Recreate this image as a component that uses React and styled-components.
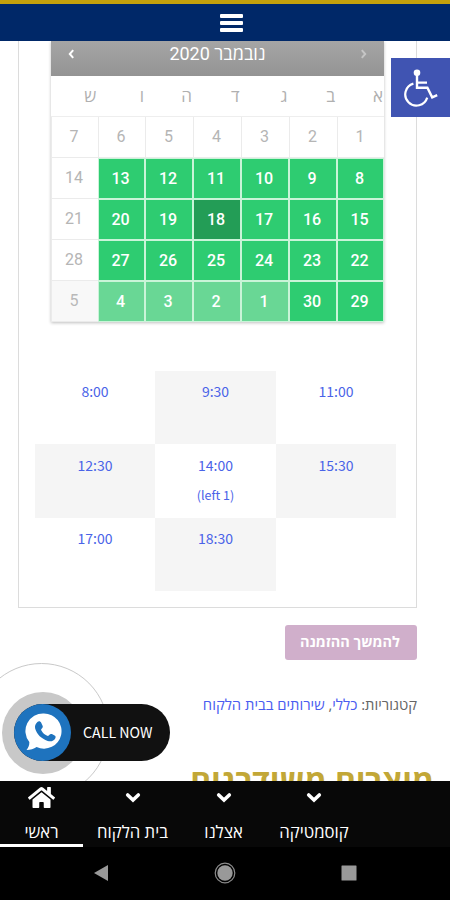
import React from "react";
import styled, { createGlobalStyle } from "styled-components";
import { FaHome } from "react-icons/fa";

const weekdays = ["א", "ב", "ג", "ד", "ה", "ו", "ש"];

const days = [
  [1, "off"], [2, "off"], [3, "off"], [4, "off"], [5, "off"], [6, "off"], [7, "off"],
  [8, "open"], [9, "open"], [10, "open"], [11, "open"], [12, "open"], [13, "open"], [14, "off"],
  [15, "open"], [16, "open"], [17, "open"], [18, "current"], [19, "open"], [20, "open"], [21, "off"],
  [22, "open"], [23, "open"], [24, "open"], [25, "open"], [26, "open"], [27, "open"], [28, "off"],
  [29, "open"], [30, "open"], [1, "next"], [2, "next"], [3, "next"], [4, "next"], [5, "nextOff"],
];

const slots = ["8:00", "9:30", "11:00", "12:30", "14:00", "15:30", "17:00", "18:30"];

const links = [
  { label: "בית הלקוח", width: 99 },
  { label: "אצלנו", width: 83 },
  { label: "קוסמטיקה", width: 98 },
];

const App = () => {
  return (
    <React.Fragment>
      <GlobalStyle />
      <Screen>
        <TopBar>
          <Burger>
            <span />
            <span />
            <span />
          </Burger>
        </TopBar>
        <Page>
          <Card>
            <Calendar>
              <Month>
                <Arrow>
                  <svg width="7" height="10" viewBox="0 0 7 10">
                    <path d="M5.2 1.2 1.8 5l3.4 3.8" />
                  </svg>
                </Arrow>
                <Title>נובמבר 2020</Title>
                <Arrow $dim>
                  <svg width="7" height="10" viewBox="0 0 7 10">
                    <path d="M1.8 1.2 5.2 5 1.8 8.8" />
                  </svg>
                </Arrow>
              </Month>
              <Weekdays>
                {weekdays.map((day) => (
                  <span key={day}>{day}</span>
                ))}
              </Weekdays>
              <Days>
                {days.map(([day, state], index) => (
                  <Day key={index} $state={state}>
                    {day}
                  </Day>
                ))}
              </Days>
            </Calendar>
            <Slots>
              {slots.map((slot, index) => (
                <Slot key={slot} $shaded={index % 2 === 1}>
                  {slot}
                  {slot === "14:00" && <small>(left 1)</small>}
                </Slot>
              ))}
            </Slots>
          </Card>
          <Submit>להמשך ההזמנה</Submit>
          <Categories>
            קטגוריות: <a>כללי</a>, <a>שירותים בבית הלקוח</a>
          </Categories>
          <Heading>מוצרים משודרגים</Heading>
          <Accessibility>
            <svg width="36" height="38" viewBox="0 0 36 38">
              <circle cx="14" cy="3.8" r="3.3" fill="#fff" />
              <path
                d="M14 6v12.8h10.4l4.8 9.6 5-2.3M15 13.6h9"
                fill="none"
                stroke="#fff"
                strokeWidth="2.4"
              />
              <path
                d="M10.4 14.6a11.2 11.2 0 1 0 13.8 14"
                fill="none"
                stroke="#fff"
                strokeWidth="2.2"
              />
            </svg>
          </Accessibility>
          <CallWidget>
            <Ring />
            <Halo />
            <CallPill>
              <CallIcon>
                <svg width="38" height="40" viewBox="0 0 38 40">
                  <path
                    d="M20 1.5a17.6 17.6 0 1 1-7.4 33.6C9.8 36.9 6.4 38 2.5 38c2-2.3 3-5 2.8-7.9A17.6 17.6 0 0 1 20 1.5z"
                    fill="#fff"
                  />
                  <path
                    d="M13.4 10.1c1.2-1.4 2.9-1.2 3.8.6l1.4 3c.5 1.1.1 2-1 3.1-.6.6-.6 1.1-.2 1.8 1.4 2.5 3.2 4.1 5.8 5.2.7.3 1.2.1 1.8-.6 1-1.2 1.8-1.6 2.9-1.1l2.7 1.4c1.2.7 1.3 1.7.6 3-1.4 2.5-4.3 3.5-7.5 2.4-6.4-2.2-10.7-6.2-12.5-12.1-.7-2.6.3-5 2.2-6.7z"
                    fill="#1e73be"
                  />
                </svg>
              </CallIcon>
              CALL NOW
            </CallPill>
          </CallWidget>
        </Page>
        <BottomNav>
          <NavItem $width={83} $active>
            <FaHome size={27} />
            <span>ראשי</span>
          </NavItem>
          {links.map(({ label, width }) => (
            <NavItem key={label} $width={width}>
              <svg width="16" height="27" viewBox="0 0 16 27">
                <path
                  d="M2.7 11 8 16l5.3-5"
                  fill="none"
                  stroke="#fff"
                  strokeWidth="3.6"
                  strokeLinecap="round"
                />
              </svg>
              <span>{label}</span>
            </NavItem>
          ))}
        </BottomNav>
        <SystemBar>
          <svg width="16" height="18" viewBox="0 0 16 18">
            <path d="M1 9 15 1v16z" fill="#999" />
          </svg>
          <svg width="22" height="22" viewBox="0 0 22 22">
            <circle cx="11" cy="11" r="9.8" fill="none" stroke="#8c8c8c" strokeWidth="1.2" />
            <circle cx="11" cy="11" r="7.7" fill="#999" />
          </svg>
          <svg width="16" height="16" viewBox="0 0 16 16">
            <rect x="0.5" y="0.5" width="15" height="15" rx="0.5" fill="#999" />
          </svg>
        </SystemBar>
      </Screen>
    </React.Fragment>
  );
};

const GlobalStyle = createGlobalStyle`
  *{
    box-sizing: border-box;
  }
  body{
    margin: 0;
    background: #fff;
  }
`;

const Screen = styled.div`
  width: 450px;
  height: 900px;
  display: flex;
  flex-direction: column;
  overflow: hidden;
  font-family: "Open Sans", "Noto Sans", sans-serif;
`;

const TopBar = styled.header`
  height: 41px;
  flex-shrink: 0;
  display: flex;
  justify-content: center;
  padding: 10px 0 0 13px;
  border-top: 4px solid #c5a10b;
  background: #002868;
`;

const Burger = styled.div`
  width: 23px;
  height: 18px;
  display: flex;
  flex-direction: column;
  justify-content: space-between;
  span{
    height: 4px;
    border-radius: 1px;
    background: #fff;
  }
`;

const Page = styled.main`
  position: relative;
  height: 740px;
  flex-shrink: 0;
  overflow: hidden;
  direction: rtl;
  padding: 0 33px 0 18px;
`;

const Card = styled.section`
  height: 567px;
  border: 1px solid #dcdcdc;
  border-top: 0;
  padding: 0 20px 0 16px;
`;

const Calendar = styled.div`
  width: 333px;
  margin-right: 12px;
  box-shadow: 0 1px 3px rgba(0, 0, 0, 0.25);
  font-family: Roboto, "Open Sans", sans-serif;
`;

const Month = styled.div`
  height: 35px;
  display: flex;
  direction: ltr;
  justify-content: space-between;
  padding: 8px 17px 0 17px;
  background: linear-gradient(#a5a5a5, #949494);
  color: #fff;
`;

const Title = styled.div`
  direction: rtl;
  font-size: 18px;
  line-height: 10px;
`;

const Arrow = styled.span`
  opacity: ${({ $dim }) => ($dim ? 0.4 : 1)};
  svg{
    display: block;
    fill: none;
    stroke: #fff;
    stroke-width: 2;
  }
`;

const Weekdays = styled.div`
  height: 41px;
  display: grid;
  grid-template-columns: repeat(6, 47.8px) 46px;
  border-bottom: 1px solid #eee;
  color: #b0b0b0;
  font-size: 17px;
  line-height: 41px;
  span{
    padding-right: 1px;
  }
`;

const Days = styled.div`
  display: grid;
  grid-template-columns: 47px repeat(4, 48px) 47px 47px;
  grid-auto-rows: 41px;
`;

const dayColors = {
  off: ["#fff", "#b5b5b5", "#ebebeb"],
  open: ["#2ecc71", "#fff", "#c9f4d8"],
  current: ["#239d56", "#fff", "#c9f4d8"],
  next: ["#69d795", "#fff", "#c9f4d8"],
  nextOff: ["#f8f8f8", "#b9b9b9", "#ebebeb"],
};

const Day = styled.div`
  padding-right: 1px;
  padding-right: 2px;
  background: ${({ $state }) => dayColors[$state][0]};
  color: ${({ $state }) => dayColors[$state][1]};
  border: 0 solid ${({ $state }) => dayColors[$state][2]};
  border-width: ${({ $state }) => ($state.includes("ff") ? "0 0 1px 1px" : "1px")};
  font-size: 16px;
  font-weight: ${({ $state }) => ($state.includes("ff") ? 400 : 500)};
  line-height: ${({ $state }) => ($state.includes("ff") ? 40 : 39)}px;
  text-align: center;
`;

const Slots = styled.div`
  display: grid;
  direction: ltr;
  grid-template-columns: 120px 121px 120px;
  grid-auto-rows: 73.3px;
  margin-top: 49px;
`;

const Slot = styled.div`
  padding-top: 6.4px;
  background: ${({ $shaded }) => ($shaded ? "#f5f5f5" : "#fff")};
  color: #4a63e8;
  font-family: "Noto Sans CJK JP", sans-serif;
  font-size: 14px;
  line-height: 29px;
  text-align: center;
  small{
    display: block;
    font-size: 12.5px;
  }
`;

const Submit = styled.button`
  display: block;
  width: 132px;
  height: 35px;
  margin-top: 17px;
  padding: 0 2px 2px 0;
  border: 0;
  border-radius: 3px;
  background: #d0afcb;
  color: #fff;
  font: 700 14.5px "Open Sans", sans-serif;
`;

const Categories = styled.p`
  margin: 34px 0 0;
  color: #666;
  font-size: 14.8px;
  line-height: 20px;
  white-space: nowrap;
  a{
    color: #4a5cf0;
  }
`;

const Heading = styled.h2`
  margin: 45px -17px 0 0;
  color: #c2a737;
  font-size: 32px;
  font-weight: 700;
  line-height: 44px;
  white-space: nowrap;
`;

const Accessibility = styled.div`
  position: absolute;
  top: 17px;
  right: 0;
  width: 59px;
  height: 59px;
  padding: 11px 11px 0 0;
  background: #4054b2;
`;

/* floating call button */
const CallWidget = styled.div`
  position: absolute;
  left: 0;
  top: 621px;
  width: 170px;
  height: 140px;
  direction: ltr;
`;

const Ring = styled.div`
  position: absolute;
  left: -26px;
  top: 1px;
  width: 135px;
  height: 135px;
  border: 1px solid #c9c9c9;
  border-radius: 50%;
`;

const Halo = styled.div`
  position: absolute;
  left: 2px;
  top: 30px;
  width: 82px;
  height: 82px;
  border-radius: 50%;
  background: #c8c8c8;
`;

const CallPill = styled.div`
  position: absolute;
  left: 14px;
  top: 42px;
  width: 156px;
  height: 57px;
  display: flex;
  align-items: center;
  gap: 12px;
  border-radius: 29px;
  background: #111;
  color: #fff;
  font-family: "Noto Sans CJK JP", sans-serif;
  font-size: 14.2px;
  line-height: 20px;
  padding-bottom: 1px;
  white-space: nowrap;
`;

const CallIcon = styled.span`
  width: 57px;
  height: 57px;
  display: flex;
  align-items: center;
  justify-content: center;
  flex-shrink: 0;
  border-radius: 50%;
  background: #1e73be;
`;

const BottomNav = styled.nav`
  height: 66px;
  flex-shrink: 0;
  display: flex;
  background: #080808;
  color: #fff;
`;

const NavItem = styled.a`
  width: ${({ $width }) => $width}px;
  display: flex;
  flex-direction: column;
  align-items: center;
  padding-top: 3px;
  border-bottom: 3px solid ${({ $active }) => ($active ? "#fff" : "transparent")};
  font-size: 16.7px;
  line-height: 20px;
  white-space: nowrap;
  span{
    margin-top: 11px;
  }
`;

const SystemBar = styled.footer`
  flex: 1;
  display: flex;
  align-items: center;
  justify-content: space-between;
  padding: 0 93px 1px;
  background: #000;
`;

export default App;
